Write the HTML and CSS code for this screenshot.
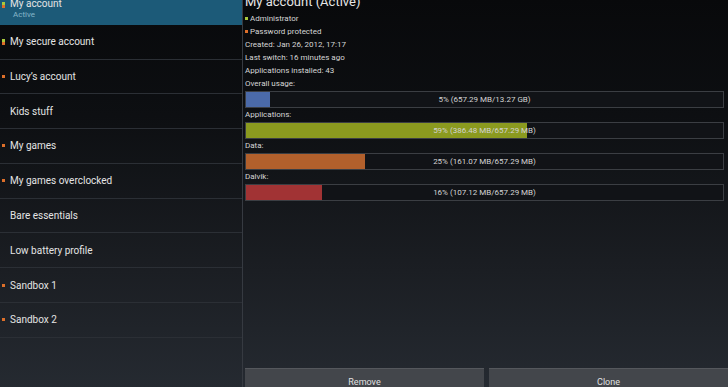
FILE: index.html
```html
<!DOCTYPE html>
<html>
<head>
  <meta charset="utf-8">
  <link rel="stylesheet" href="styles.css">
</head>
<body>
  <div class="screen">
    <aside class="accounts">
      <ul class="account-list">
        <li class="account selected">
          <span class="marks"><i class="mark green"></i><i class="mark orange"></i></span>
          <div class="account-text">
            <div class="account-name">My account</div>
            <div class="account-sub">Active</div>
          </div>
        </li>
        <li class="account">
          <span class="marks"><i class="mark green"></i><i class="mark orange"></i></span>
          <div class="account-name">My secure account</div>
        </li>
        <li class="account">
          <span class="marks"><i class="mark orange"></i></span>
          <div class="account-name">Lucy’s account</div>
        </li>
        <li class="account">
          <span class="marks"></span>
          <div class="account-name">Kids stuff</div>
        </li>
        <li class="account">
          <span class="marks"><i class="mark orange"></i></span>
          <div class="account-name">My games</div>
        </li>
        <li class="account">
          <span class="marks"><i class="mark orange"></i></span>
          <div class="account-name">My games overclocked</div>
        </li>
        <li class="account">
          <span class="marks"></span>
          <div class="account-name">Bare essentials</div>
        </li>
        <li class="account">
          <span class="marks"></span>
          <div class="account-name">Low battery profile</div>
        </li>
        <li class="account">
          <span class="marks"><i class="mark orange"></i></span>
          <div class="account-name">Sandbox 1</div>
        </li>
        <li class="account">
          <span class="marks"><i class="mark orange"></i></span>
          <div class="account-name">Sandbox 2</div>
        </li>
      </ul>
    </aside>

    <main class="details">
      <h1 class="title">My account (Active)</h1>
      <div class="info-line"><i class="mark green"></i>Administrator</div>
      <div class="info-line"><i class="mark orange"></i>Password protected</div>
      <div class="info-line">Created: Jan 26, 2012, 17:17</div>
      <div class="info-line">Last switch: 16 minutes ago</div>
      <div class="info-line">Applications installed: 43</div>

      <div class="usage">
        <div class="usage-label">Overall usage:</div>
        <div class="bar">
          <div class="bar-fill blue" style="width: 5%"></div>
          <span class="bar-text">5% (657.29 MB/13.27 GB)</span>
        </div>
      </div>
      <div class="usage">
        <div class="usage-label">Applications:</div>
        <div class="bar">
          <div class="bar-fill olive" style="width: 59%"></div>
          <span class="bar-text">59% (386.48 MB/657.29 MB)</span>
        </div>
      </div>
      <div class="usage">
        <div class="usage-label">Data:</div>
        <div class="bar">
          <div class="bar-fill orange" style="width: 25%"></div>
          <span class="bar-text">25% (161.07 MB/657.29 MB)</span>
        </div>
      </div>
      <div class="usage">
        <div class="usage-label">Dalvik:</div>
        <div class="bar">
          <div class="bar-fill red" style="width: 16%"></div>
          <span class="bar-text">16% (107.12 MB/657.29 MB)</span>
        </div>
      </div>

      <div class="actions">
        <button class="action-btn">Remove</button>
        <button class="action-btn">Clone</button>
      </div>
    </main>
  </div>
</body>
</html>
```

FILE: styles.css
```css
* {
  margin: 0;
  padding: 0;
  box-sizing: border-box;
}

html, body {
  width: 728px;
  height: 387px;
  overflow: hidden;
}

body {
  font-family: Roboto, "Liberation Sans", sans-serif;
  color: #e2e2e2;
  background: linear-gradient(180deg, #08090b 0%, #0d0f12 30%, #1b1e23 70%, #252a31 100%);
}

.screen {
  display: flex;
  height: 387px;
}

/* left column: account list */
.accounts {
  width: 243px;
  flex-shrink: 0;
  border-right: 1px solid #363a41;
  overflow: hidden;
}

.account-list {
  list-style: none;
  margin-top: -10px;
}

.account {
  display: flex;
  align-items: center;
  height: 34.78px;
  padding-left: 2px;
  border-bottom: 1px solid #2b2f35;
}

.account.selected {
  background: #1c5a78;
  border-bottom-color: #1c5a78;
  align-items: flex-end;
  padding-bottom: 4px;
}

.marks {
  width: 8px;
  display: flex;
  flex-direction: column;
}

.account.selected .marks {
  align-self: flex-start;
  margin-top: 12px;
}

.mark {
  display: inline-block;
  width: 3px;
  height: 3px;
}

.mark.green {
  background: #a9c93c;
}

.mark.orange {
  background: #dd6f2a;
}

.account-name {
  font-size: 10px;
  line-height: 13px;
  color: #e4e4e4;
}

.account-sub {
  font-size: 8px;
  line-height: 10px;
  color: #86b6c9;
  padding-left: 3px;
}

/* right column: details */
.details {
  flex: 1;
  display: flex;
  flex-direction: column;
  padding: 0 2px;
}

.title {
  font-size: 13px;
  font-weight: 400;
  line-height: 20px;
  margin-top: -8px;
  color: #e6e6e6;
}

.info-line {
  display: flex;
  align-items: center;
  gap: 2px;
  font-size: 8px;
  line-height: 13px;
  color: #d6d6d6;
}

.usage-label {
  font-size: 8px;
  line-height: 14px;
  color: #d6d6d6;
}

.bar {
  position: relative;
  height: 17px;
  width: 479px;
  border: 1px solid #3b3e43;
  background: #111317;
  display: flex;
}

.bar-fill {
  height: 100%;
}

.bar-fill.blue {
  background: #4b6aa9;
}

.bar-fill.olive {
  background: #8b9a1f;
}

.bar-fill.orange {
  background: #b2602c;
}

.bar-fill.red {
  background: #a13334;
}

.bar-text {
  position: absolute;
  left: 0;
  right: 0;
  top: 0;
  line-height: 15px;
  text-align: center;
  font-size: 8px;
  color: #d4d4d4;
}

.actions {
  margin-top: auto;
  display: flex;
  gap: 5px;
  margin-right: -2px;
}

.action-btn {
  flex: 1;
  height: 26px;
  margin-bottom: -7px;
  border: none;
  border-top: 1px solid #55585d;
  background: #43464b;
  color: #e0e0e0;
  font-family: Roboto, "Liberation Sans", sans-serif;
  font-size: 9px;
  line-height: 24px;
}
```
